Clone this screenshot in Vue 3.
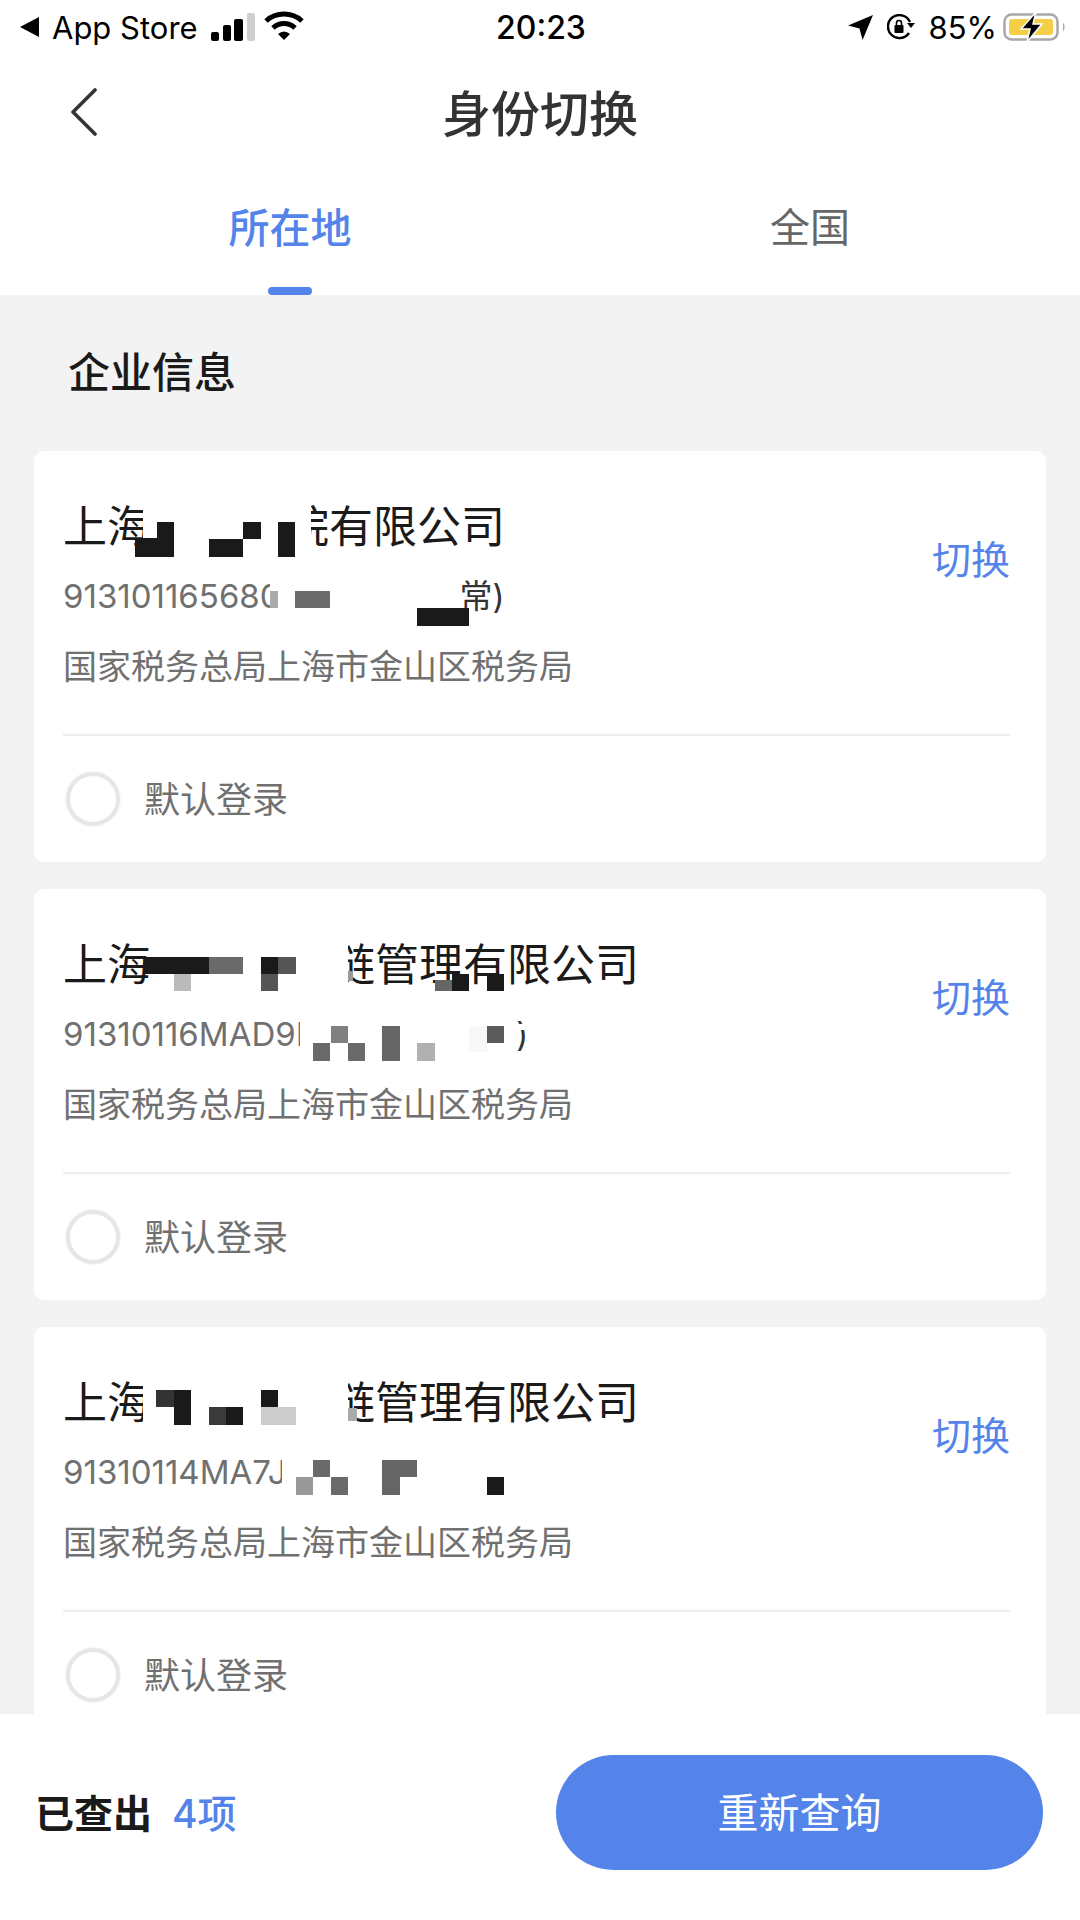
<script setup>
const dark = '#1a1a1a'
const white = '#ffffff'

// mosaic blocks sit over the text, [x, y, w, h, colour] relative to the card
const companies = [
  {
    head: '上海',
    gap: 134,
    tail: '院有限公司',
    tax: '9131011656800',
    taxGap: 158,
    taxTail: '常)',
    blocks: [
      [109, 40, 168, 70, white],
      [236, 123, 30, 44, white],
      [101, 87, 39, 19, dark],
      [123, 71, 17, 16, dark],
      [175, 88, 34, 18, dark],
      [209, 71, 18, 17, dark],
      [244, 71, 17, 35, dark],
      [236, 140, 8, 17, '#aaaaaa'],
      [261, 140, 35, 17, '#6b6b6b'],
      [383, 157, 52, 18, dark]
    ]
  },
  {
    head: '上海',
    gap: 180,
    tail: '链管理有限公司',
    tax: '91310116MAD9L',
    taxGap: 202,
    taxTail: ')',
    blocks: [
      [285, 40, 29, 62, white],
      [335, 96, 165, 8, white],
      [266, 130, 13, 44, white],
      [470, 135, 30, 6, white],
      [314, 82, 5, 10, '#999999'],
      [111, 68, 64, 17, dark],
      [175, 68, 34, 17, '#6a6a6a'],
      [140, 85, 17, 17, '#bbbbbb'],
      [227, 68, 17, 17, dark],
      [244, 68, 18, 17, '#555555'],
      [227, 85, 17, 17, '#555555'],
      [401, 91, 17, 11, '#666666'],
      [418, 85, 17, 17, dark],
      [453, 85, 17, 17, dark],
      [279, 154, 17, 18, '#6a6a6a'],
      [297, 137, 17, 17, '#808080'],
      [314, 154, 17, 18, '#6a6a6a'],
      [348, 137, 18, 35, '#666666'],
      [383, 154, 18, 18, '#b0b0b0'],
      [435, 137, 18, 26, '#f8f8f8'],
      [453, 137, 17, 17, '#5a5a5a']
    ]
  },
  {
    head: '上海',
    gap: 180,
    tail: '链管理有限公司',
    tax: '91310114MA7J',
    taxGap: 0,
    taxTail: '',
    blocks: [
      [109, 40, 110, 62, white],
      [285, 40, 29, 62, white],
      [248, 130, 14, 44, white],
      [314, 81, 9, 13, '#aaaaaa'],
      [122, 63, 18, 17, '#333333'],
      [140, 63, 17, 35, dark],
      [175, 80, 17, 18, '#3a3a3a'],
      [192, 80, 17, 18, dark],
      [227, 63, 17, 17, dark],
      [227, 80, 35, 18, '#cccccc'],
      [262, 150, 17, 18, '#999999'],
      [279, 133, 17, 17, '#6a6a6a'],
      [297, 150, 17, 18, '#6a6a6a'],
      [348, 133, 18, 35, '#666666'],
      [366, 133, 17, 17, '#666666'],
      [453, 150, 17, 18, dark]
    ]
  }
]

function blockStyle(b) {
  return {
    left: b[0] + 'px',
    top: b[1] + 'px',
    width: b[2] + 'px',
    height: b[3] + 'px',
    background: b[4]
  }
}
</script>

<template>
  <div class="page">
    <header class="top">
      <div class="status">
        <div class="status-left">
          <svg class="ic-back" viewBox="0 0 19 20"><path d="M19 0V20L0 10Z" fill="#000" /></svg>
          <span class="carrier">App Store</span>
          <svg class="ic-signal" viewBox="0 0 44 28">
            <rect x="0" y="19" width="8" height="9" rx="2" fill="#000" />
            <rect x="12" y="12" width="8" height="16" rx="2" fill="#000" />
            <rect x="23" y="6" width="9" height="22" rx="2" fill="#000" />
            <rect x="36" y="0" width="8" height="28" rx="2" fill="#cfcfcf" />
          </svg>
          <svg class="ic-wifi" viewBox="0 0 40 30">
            <path d="M2 10A27 27 0 0 1 38 10" fill="none" stroke="#000" stroke-width="5" />
            <path d="M9 17A16 16 0 0 1 31 17" fill="none" stroke="#000" stroke-width="5" />
            <path d="M14 23Q20 18 26 23L20 29Z" fill="#000" />
          </svg>
        </div>
        <span class="time">20:23</span>
        <div class="status-right">
          <svg class="ic-arrow" viewBox="0 0 24 24"><path d="M24 0L14 24L11 13L0 10Z" fill="#000" /></svg>
          <svg class="ic-lock" viewBox="0 0 28 26">
            <path d="M22 19A11.5 11.5 0 1 1 23 8" fill="none" stroke="#000" stroke-width="2.4" />
            <path d="M20 9H28L24 14Z" fill="#000" />
            <rect x="7.5" y="11" width="9" height="8" rx="1" fill="#000" />
            <path d="M9.5 11V9A2.5 2.5 0 0 1 14.5 9V11" fill="none" stroke="#000" stroke-width="1.6" />
          </svg>
          <span class="battery-text">85%</span>
          <svg class="ic-battery" viewBox="0 0 63 30">
            <rect x="1.5" y="2.5" width="53" height="25" rx="7" fill="none" stroke="#a8a8a8" stroke-width="2.5" />
            <rect x="6" y="7" width="44" height="16" rx="3" fill="#f5cf47" />
            <path d="M60 11C62 12 62 18 60 19Z" fill="#a8a8a8" />
            <path d="M33 0L18 17H27L24 30L39 12H30Z" fill="#000" stroke="#fff" stroke-width="1.5" />
          </svg>
        </div>
      </div>

      <div class="nav">
        <svg class="ic-chevron" viewBox="0 0 27 48">
          <path d="M25 2L3 24L25 46" fill="none" stroke="#333" stroke-width="3.6" stroke-linecap="round" stroke-linejoin="round" />
        </svg>
        <h1 class="title">身份切换</h1>
      </div>

      <div class="tabs">
        <div class="tab active">所在地</div>
        <div class="tab">全国</div>
      </div>
    </header>

    <main class="content">
      <h2 class="section">企业信息</h2>
      <div class="list">
        <section v-for="(c, i) in companies" :key="i" class="card">
          <div class="card-top">
            <div class="info">
              <div class="name">
                <span>{{ c.head }}</span>
                <span class="hole" :style="{ width: c.gap + 'px' }"></span>
                <span>{{ c.tail }}</span>
              </div>
              <div class="tax">
                <span>{{ c.tax }}</span>
                <span class="hole" :style="{ width: c.taxGap + 'px' }"></span>
                <span class="tax-tail">{{ c.taxTail }}</span>
              </div>
              <div class="office">国家税务总局上海市金山区税务局</div>
            </div>
            <span class="switch">切换</span>
          </div>
          <div class="card-bottom">
            <span class="radio"></span>
            <span class="radio-label">默认登录</span>
          </div>
          <i v-for="(b, n) in c.blocks" :key="n" class="block" :style="blockStyle(b)"></i>
        </section>
      </div>
    </main>

    <footer class="bottom">
      <div class="count">已查出<span class="num">4项</span></div>
      <button class="requery">重新查询</button>
    </footer>
  </div>
</template>

<style>
html, body {
  margin: 0;
  background: #fff;
}
</style>

<style scoped>
.page {
  width: 1080px;
  height: 1920px;
  display: flex;
  flex-direction: column;
  overflow: hidden;
  background: #f3f3f3;
  font-family: "Inter", "Noto Sans CJK SC", sans-serif;
}

.top {
  background: #fff;
  height: 295px;
  flex: none;
}

.status {
  height: 54px;
  padding: 0 14px 0 20px;
  display: flex;
  align-items: center;
  justify-content: space-between;
  color: #000;
}

.status-left {
  width: 400px;
  display: flex;
  align-items: center;
}

.status-right {
  width: 404px;
  display: flex;
  align-items: center;
  justify-content: flex-end;
}

.carrier {
  font-size: 31px;
  margin-left: 13px;
  white-space: nowrap;
}

.ic-back { width: 19px; height: 20px; }
.ic-signal { width: 44px; height: 28px; margin-left: 13px; }
.ic-wifi { width: 40px; height: 30px; margin-left: 9px; margin-top: -2px; }
.ic-arrow { width: 25px; height: 25px; }
.ic-lock { width: 28px; height: 26px; margin-left: 14px; }
.ic-battery { width: 63px; height: 30px; margin-left: 6px; }

.time {
  font-size: 32px;
  font-weight: 500;
}

.battery-text {
  font-size: 31px;
  margin-left: 14px;
}

.nav {
  height: 112px;
  position: relative;
  display: flex;
  align-items: center;
  justify-content: center;
}

.ic-chevron {
  position: absolute;
  left: 70px;
  top: 34px;
  width: 27px;
  height: 48px;
}

.title {
  margin: 0;
  font-size: 49px;
  font-weight: 500;
  color: #333;
}

.tabs {
  height: 129px;
  padding: 0 10px 0 30px;
  display: flex;
}

.tab {
  flex: 1;
  position: relative;
  padding-top: 32px;
  line-height: 60px;
  text-align: center;
  font-size: 40px;
  color: #666;
}

.tab.active {
  color: #5484ea;
  font-weight: 500;
  font-size: 41px;
}

.tab.active::after {
  content: "";
  position: absolute;
  left: 238px;
  bottom: 0;
  width: 44px;
  height: 8px;
  border-radius: 4px;
  background: #5484ea;
}

.content {
  flex: 1;
  min-height: 0;
  overflow: hidden;
}

.section {
  margin: 50px 0 50px 68px;
  font-size: 42px;
  line-height: 56px;
  font-weight: 500;
  color: #1a1a1a;
}

.list {
  padding: 0 34px;
  display: flex;
  flex-direction: column;
  gap: 27px;
}

.card {
  position: relative;
  flex: none;
  height: 411px;
  padding: 0 36px 0 29px;
  background: #fff;
  border-radius: 10px;
}

.card-top {
  height: 283px;
  display: flex;
  justify-content: space-between;
  border-bottom: 2px solid #eeeeee;
}

.info {
  padding-top: 46px;
}

.name {
  display: flex;
  font-size: 44px;
  line-height: 60px;
  color: #1a1a1a;
}

.tax {
  display: flex;
  margin-top: 17px;
  font-size: 33px;
  line-height: 44px;
  color: #707070;
}

.tax-tail {
  color: #333;
}

.hole {
  flex: none;
}

.office {
  margin-top: 25px;
  font-size: 34px;
  line-height: 48px;
  color: #707070;
}

.switch {
  margin-top: 84px;
  font-size: 39px;
  line-height: 50px;
  height: 50px;
  color: #5484ea;
}

.card-bottom {
  height: 126px;
  display: flex;
  align-items: center;
  padding-left: 3px;
}

.radio {
  width: 54px;
  height: 54px;
  box-sizing: border-box;
  border: 4px solid #e6e6e6;
  border-radius: 50%;
  box-shadow: 0 0 2px #dddddd;
}

.radio-label {
  margin-left: 24px;
  padding-bottom: 4px;
  font-size: 36px;
  color: #707070;
}

.block {
  position: absolute;
}

.bottom {
  flex: none;
  height: 206px;
  background: #fff;
  padding: 41px 37px 50px 35px;
  box-sizing: border-box;
  display: flex;
  align-items: center;
  justify-content: space-between;
}

.count {
  padding-bottom: 4px;
  font-size: 39px;
  font-weight: 700;
  color: #1a1a1a;
}

.num {
  margin-left: 20px;
  font-weight: 500;
  color: #5484ea;
}

.requery {
  width: 487px;
  height: 115px;
  padding: 0 0 5px;
  border: 0;
  border-radius: 58px;
  background: #5484ea;
  color: #fff;
  font-family: inherit;
  font-size: 41px;
}
</style>
